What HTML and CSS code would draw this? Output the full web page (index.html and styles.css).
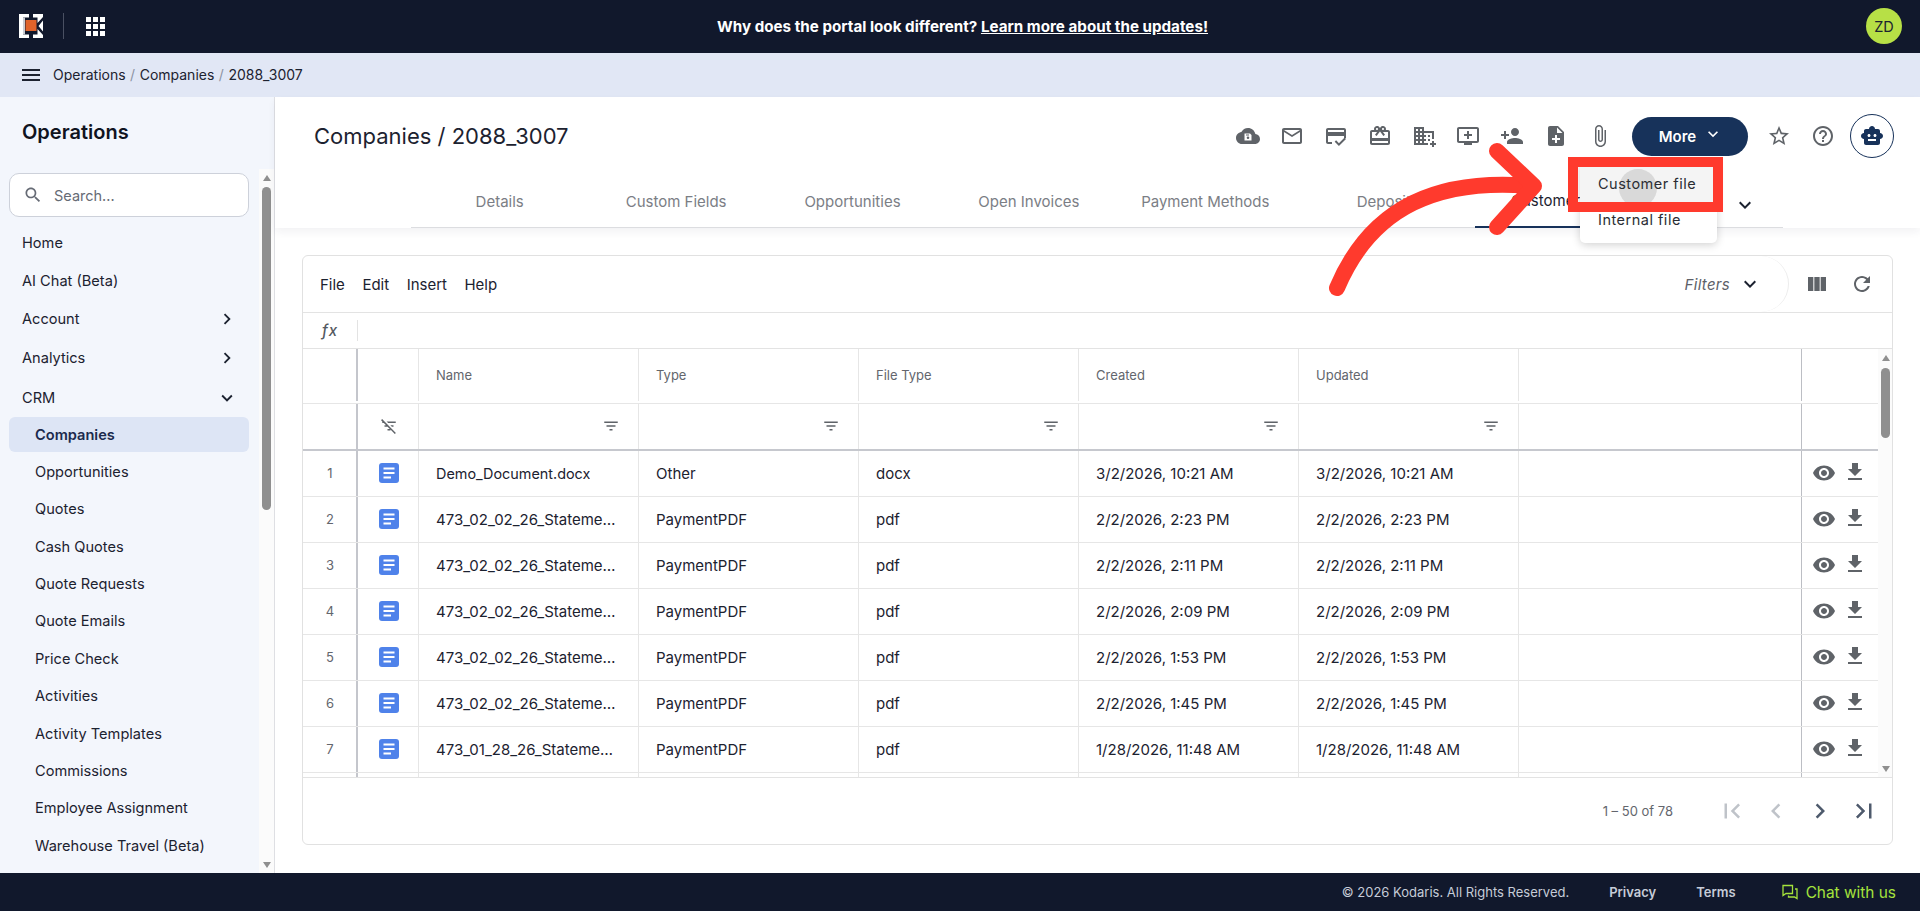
FILE: index.html
```html
<!DOCTYPE html>
<html lang="en">
<head>
<meta charset="utf-8">
<title>Companies / 2088_3007</title>
<link rel="stylesheet" href="styles.css">
</head>
<body>
<svg class="sprite" width="0" height="0" aria-hidden="true">
  <symbol id="i-cloud" viewBox="0 0 24 24"><path d="M19.35 10.04C18.67 6.59 15.64 4 12 4 9.11 4 6.6 5.64 5.35 8.04 2.34 8.36 0 10.91 0 14c0 3.31 2.69 6 6 6h13c2.76 0 5-2.24 5-5 0-2.64-2.05-4.78-4.65-4.96zM15.5 16.5h-7v-7h5.5l1.5 1.5z M12 15a1.3 1.3 0 1 0 0-2.6 1.3 1.3 0 0 0 0 2.6zM10 11.6h3v-1h-3z" fill-rule="evenodd"/></symbol>
  <symbol id="i-mail" viewBox="0 0 24 24"><path d="M20 4H4c-1.1 0-1.99.9-1.99 2L2 18c0 1.1.9 2 2 2h16c1.1 0 2-.9 2-2V6c0-1.1-.9-2-2-2zm0 14H4V8l8 5 8-5v10zm-8-7L4 6h16l-8 5z"/></symbol>
  <symbol id="i-card" viewBox="0 0 24 24"><path d="M20 4H4c-1.11 0-2 .89-2 2v12c0 1.11.89 2 2 2h4v-2H4v-6h16v2h2V6c0-1.11-.89-2-2-2zm0 4H4V6h16v2zm-5.07 11.17l-2.83-2.83-1.41 1.41L14.93 22 22 14.93l-1.41-1.41-5.66 5.65z"/></symbol>
  <symbol id="i-gift" viewBox="0 0 24 24"><path d="M20 6h-2.18c.11-.31.18-.65.18-1 0-1.66-1.34-3-3-3-1.05 0-1.96.54-2.5 1.35l-.5.67-.5-.68C10.96 2.54 10.05 2 9 2 7.34 2 6 3.34 6 5c0 .35.07.69.18 1H4c-1.11 0-1.99.89-1.99 2L2 19c0 1.11.89 2 2 2h16c1.11 0 2-.89 2-2V8c0-1.11-.89-2-2-2zm-5-2c.55 0 1 .45 1 1s-.45 1-1 1-1-.45-1-1 .45-1 1-1zM9 4c.55 0 1 .45 1 1s-.45 1-1 1-1-.45-1-1 .45-1 1-1zm11 15H4v-2h16v2zm0-5H4V8h5.08L7 10.83 8.62 12 11 8.76l1-1.36 1 1.36L15.38 12 17 10.83 14.92 8H20v6z"/></symbol>
  <symbol id="i-domain" viewBox="0 0 24 24"><path d="M12 7V3H2v18h14v-2h-4v-2h2v-2h-2v-2h2v-2h-2V9h8v6h2V7H12zM6 19H4v-2h2v2zm0-4H4v-2h2v2zm0-4H4V9h2v2zm0-4H4V5h2v2zm4 12H8v-2h2v2zm0-4H8v-2h2v2zm0-4H8V9h2v2zm0-4H8V5h2v2zm14 12v2h-2v2h-2v-2h-2v-2h2v-2h2v2h2zm-6-8h-2v2h2v-2zm0 4h-2v2h2v-2z"/></symbol>
  <symbol id="i-queue" viewBox="0 0 24 24"><path d="M21 3H3c-1.11 0-2 .89-2 2v12c0 1.1.89 2 2 2h5v2h8v-2h5c1.1 0 1.99-.9 1.99-2L23 5c0-1.11-.9-2-2-2zm0 14H3V5h18v12zm-5-7v2h-3v3h-2v-3H8v-2h3V7h2v3h3z"/></symbol>
  <symbol id="i-person" viewBox="0 0 24 24"><path d="M15 12c2.21 0 4-1.79 4-4s-1.79-4-4-4-4 1.79-4 4 1.79 4 4 4zm-9-2V7H4v3H1v2h3v3h2v-3h3v-2H6zm9 4c-2.67 0-8 1.34-8 4v2h16v-2c0-2.66-5.33-4-8-4z"/></symbol>
  <symbol id="i-note" viewBox="0 0 24 24"><path d="M14 2H6c-1.1 0-1.99.9-1.99 2L4 20c0 1.1.89 2 1.99 2H18c1.1 0 2-.9 2-2V8l-6-6zm2 14h-3v3h-2v-3H8v-2h3v-3h2v3h3v2zm-3-7V3.5L18.5 9H13z"/></symbol>
  <symbol id="i-attach" viewBox="0 0 24 24"><path d="M16.5 6v11.5c0 2.21-1.79 4-4 4s-4-1.79-4-4V5c0-1.38 1.12-2.5 2.5-2.5s2.5 1.12 2.5 2.5v10.5c0 .55-.45 1-1 1s-1-.45-1-1V6H10v9.5c0 1.38 1.12 2.5 2.5 2.5s2.5-1.12 2.5-2.5V5c0-2.21-1.79-4-4-4S7 2.79 7 5v12.5c0 3.04 2.46 5.5 5.5 5.5s5.5-2.46 5.5-5.5V6h-1.5z"/></symbol>
  <symbol id="i-star" viewBox="0 0 24 24"><path d="M22 9.24l-7.19-.62L12 2 9.19 8.63 2 9.24l5.46 4.73L5.82 21 12 17.27 18.18 21l-1.63-7.03L22 9.24zM12 15.4l-3.76 2.27 1-4.28-3.32-2.88 4.38-.38L12 6.1l1.71 4.04 4.38.38-3.32 2.88 1 4.28L12 15.4z"/></symbol>
  <symbol id="i-help" viewBox="0 0 24 24"><path d="M11 18h2v-2h-2v2zm1-16C6.48 2 2 6.48 2 12s4.48 10 10 10 10-4.48 10-10S17.52 2 12 2zm0 18c-4.41 0-8-3.59-8-8s3.59-8 8-8 8 3.59 8 8-3.59 8-8 8zm0-14c-2.21 0-4 1.79-4 4h2c0-1.1.9-2 2-2s2 .9 2 2c0 2-3 1.75-3 5h2c0-2.25 3-2.5 3-5 0-2.21-1.79-4-4-4z"/></symbol>
  <symbol id="i-bot" viewBox="0 0 24 24"><path d="M20 9V7c0-1.1-.9-2-2-2h-3c0-1.66-1.34-3-3-3S9 3.34 9 5H6c-1.1 0-2 .9-2 2v2c-1.66 0-3 1.34-3 3s1.34 3 3 3v4c0 1.1.9 2 2 2h12c1.1 0 2-.9 2-2v-4c1.66 0 3-1.34 3-3s-1.34-3-3-3zM7.5 11.5c0-.83.67-1.5 1.5-1.5s1.5.67 1.5 1.5S9.83 13 9 13s-1.5-.67-1.5-1.5zM16 17H8v-2h8v2zm-1-4c-.83 0-1.5-.67-1.5-1.5S14.17 10 15 10s1.5.67 1.5 1.5S15.83 13 15 13z"/></symbol>
  <symbol id="i-columns" viewBox="0 0 24 24"><path d="M14.67 5v14H9.33V5h5.34zm1 14H21V5h-5.33v14zm-7.34 0V5H3v14h5.33z"/></symbol>
  <symbol id="i-refresh" viewBox="0 0 24 24"><path d="M17.65 6.35C16.2 4.9 14.21 4 12 4c-4.42 0-7.99 3.58-7.99 8s3.57 8 7.99 8c3.73 0 6.84-2.55 7.73-6h-2.08c-.82 2.33-3.04 4-5.65 4-3.31 0-6-2.69-6-6s2.69-6 6-6c1.66 0 3.14.69 4.22 1.78L13 11h7V4l-2.35 2.35z"/></symbol>
  <symbol id="i-eye" viewBox="0 0 24 24"><path d="M12 4.5C7 4.5 2.73 7.61 1 12c1.73 4.39 6 7.5 11 7.5s9.27-3.11 11-7.5c-1.73-4.39-6-7.5-11-7.5zM12 17c-2.76 0-5-2.24-5-5s2.24-5 5-5 5 2.24 5 5-2.24 5-5 5zm0-8c-1.66 0-3 1.34-3 3s1.34 3 3 3 3-1.34 3-3-1.34-3-3-3z"/></symbol>
  <symbol id="i-download" viewBox="0 0 24 24"><path d="M19 9h-4V3H9v6H5l7 7 7-7zM5 18v2h14v-2H5z"/></symbol>
  <symbol id="i-filter" viewBox="0 0 24 24"><path d="M10 18h4v-2h-4v2zM3 6v2h18V6H3zm3 7h12v-2H6v2z"/></symbol>
  <symbol id="i-filter-off" viewBox="0 0 24 24"><path d="M10.83 8H21V6H8.83l2 2zm5 5H18v-2h-4.17l2 2zM14 16.83V18h-4v-2h3.17l-3-3H6v-2h2.17l-3-3H3V6h.17L1.39 4.22 2.8 2.81l18.38 18.38-1.41 1.41L14 16.83z"/></symbol>
  <symbol id="i-down" viewBox="0 0 24 24"><path d="M16.59 8.59L12 13.17 7.41 8.59 6 10l6 6 6-6z"/></symbol>
  <symbol id="i-right" viewBox="0 0 24 24"><path d="M10 6L8.59 7.41 13.17 12l-4.58 4.59L10 18l6-6z"/></symbol>
  <symbol id="i-left" viewBox="0 0 24 24"><path d="M15.41 7.41L14 6l-6 6 6 6 1.41-1.41L10.83 12z"/></symbol>
  <symbol id="i-first" viewBox="0 0 24 24"><path d="M18.41 16.59L13.82 12l4.59-4.59L17 6l-6 6 6 6zM6 6h2v12H6z"/></symbol>
  <symbol id="i-last" viewBox="0 0 24 24"><path d="M5.59 7.41L10.18 12l-4.59 4.59L7 18l6-6-6-6zM16 6h2v12h-2z"/></symbol>
  <symbol id="i-search" viewBox="0 0 24 24"><path d="M15.5 14h-.79l-.28-.27C15.41 12.59 16 11.11 16 9.5 16 5.91 13.09 3 9.5 3S3 5.91 3 9.5 5.91 16 9.5 16c1.61 0 3.09-.59 4.23-1.57l.27.28v.79l5 4.99L20.49 19l-4.99-5zm-6 0C7.01 14 5 11.99 5 9.5S7.01 5 9.5 5 14 7.01 14 9.5 11.99 14 9.5 14z"/></symbol>
  <symbol id="i-menu" viewBox="0 0 24 24"><path d="M3 18h18v-2H3v2zm0-5h18v-2H3v2zm0-7v2h18V6H3z"/></symbol>
  <symbol id="i-doc" viewBox="0 0 20 20"><rect width="20" height="20" rx="3" fill="#4f82ea"/><path d="M4.500 4.500h11v2h-11zM4.500 9h11v2h-11zM4.500 13.500h7.500v2H4.500z" fill="#fff"/></symbol>
</svg>

<header class="topbar">
  <div class="topbar-left">
    <svg class="logo" viewBox="0 0 24 24" aria-label="Kodaris">
      <path d="M0 0H10V3.500H4V20.500H10V24H0Z" fill="#fff"/>
      <path d="M4 3.500H6V20.500H4Z" fill="#c9ccd2"/>
      <path d="M14 0H24V3L18.500 9V3.500H14Z M14 24H24V21L18.500 15V20.500H14Z M19.500 12L24 6.500V17.500Z" fill="#fff"/>
      <rect x="6.500" y="6" width="11" height="11" fill="#e0632a"/>
    </svg>
    <span class="topbar-rule"></span>
    <div class="apps"><i></i><i></i><i></i><i></i><i></i><i></i><i></i><i></i><i></i></div>
  </div>
  <p class="banner">Why does the portal look different? <a href="#">Learn more about the updates!</a></p>
  <div class="avatar">ZD</div>
</header>

<nav class="crumbs">
  <svg class="ic ic-menu"><use href="#i-menu"/></svg>
  <span>Operations</span><em>/</em><span>Companies</span><em>/</em><span>2088_3007</span>
</nav>

<div class="body">
  <aside class="side">
    <h2 class="side-title">Operations</h2>
    <div class="side-scroll">
      <div class="side-list">
        <label class="search"><svg class="ic ic-search"><use href="#i-search"/></svg><span>Search...</span></label>
        <a class="item h38">Home</a>
        <a class="item h38">AI Chat (Beta)</a>
        <a class="item h38">Account<svg class="ic ic-nav"><use href="#i-right"/></svg></a>
        <a class="item h39">Analytics<svg class="ic ic-nav"><use href="#i-right"/></svg></a>
        <a class="item h40">CRM<svg class="ic ic-nav"><use href="#i-down"/></svg></a>
        <div class="sub">
          <a class="subitem active">Companies</a>
          <a class="subitem">Opportunities</a>
          <a class="subitem">Quotes</a>
          <a class="subitem">Cash Quotes</a>
          <a class="subitem">Quote Requests</a>
          <a class="subitem">Quote Emails</a>
          <a class="subitem">Price Check</a>
          <a class="subitem">Activities</a>
          <a class="subitem">Activity Templates</a>
          <a class="subitem">Commissions</a>
          <a class="subitem">Employee Assignment</a>
          <a class="subitem">Warehouse Travel (Beta)</a>
        </div>
      </div>
      <div class="vbar vbar-side"><b class="up"></b><i class="thumb"></i><b class="down"></b></div>
    </div>
  </aside>

  <main class="main">
    <section class="head">
      <div class="head-top">
        <h1>Companies / 2088_3007</h1>
        <div class="actions">
          <svg class="ic act"><use href="#i-cloud"/></svg>
          <svg class="ic act"><use href="#i-mail"/></svg>
          <svg class="ic act"><use href="#i-card"/></svg>
          <svg class="ic act"><use href="#i-gift"/></svg>
          <svg class="ic act"><use href="#i-domain"/></svg>
          <svg class="ic act"><use href="#i-queue"/></svg>
          <svg class="ic act"><use href="#i-person"/></svg>
          <svg class="ic act"><use href="#i-note"/></svg>
          <svg class="ic act"><use href="#i-attach"/></svg>
          <button class="more">More<svg class="ic ic-more"><use href="#i-down"/></svg></button>
          <svg class="ic act act-star"><use href="#i-star"/></svg>
          <svg class="ic act act-help"><use href="#i-help"/></svg>
          <span class="bot"><svg class="ic ic-bot"><use href="#i-bot"/></svg></span>
        </div>
      </div>
      <div class="tabs">
        <a class="tab">Details</a>
        <a class="tab">Custom Fields</a>
        <a class="tab">Opportunities</a>
        <a class="tab">Open Invoices</a>
        <a class="tab">Payment Methods</a>
        <a class="tab tab-dep">Deposits</a>
        <a class="tab current">Customer Files</a>
        <svg class="ic ic-tabs"><use href="#i-down"/></svg>
      </div>
    </section>

    <section class="card">
      <div class="toolbar">
        <div class="tmenu"><span>File</span><span>Edit</span><span>Insert</span><span>Help</span></div>
        <div class="filters"><span>Filters</span><svg class="ic ic-filters"><use href="#i-down"/></svg></div>
        <div class="ticons">
          <svg class="ic act"><use href="#i-columns"/></svg>
          <svg class="ic act"><use href="#i-refresh"/></svg>
        </div>
      </div>
      <div class="fx"><span class="fx-label">fx</span><span class="fx-input"></span></div>

      <div class="grid-wrap">
        <div class="grid">
          <div class="row row-head">
            <div class="c c-n"></div><div class="c c-i"></div>
            <div class="c">Name</div><div class="c">Type</div><div class="c">File Type</div><div class="c">Created</div><div class="c">Updated</div>
            <div class="c c-blank"></div><div class="c c-a"></div>
          </div>
          <div class="row row-filter">
            <div class="c c-n"></div><div class="c c-i"><svg class="ic ic-fl off"><use href="#i-filter-off"/></svg></div>
            <div class="c c-f"><svg class="ic ic-fl"><use href="#i-filter"/></svg></div>
            <div class="c c-f"><svg class="ic ic-fl"><use href="#i-filter"/></svg></div>
            <div class="c c-f"><svg class="ic ic-fl"><use href="#i-filter"/></svg></div>
            <div class="c c-f"><svg class="ic ic-fl"><use href="#i-filter"/></svg></div>
            <div class="c c-f"><svg class="ic ic-fl"><use href="#i-filter"/></svg></div>
            <div class="c c-blank"></div><div class="c c-a"></div>
          </div>
          <div class="row">
            <div class="c c-n">1</div><div class="c c-i"><svg class="ic-doc"><use href="#i-doc"/></svg></div>
            <div class="c"><span class="clip clip-short">Demo_Document.docx</span></div><div class="c">Other</div><div class="c">docx</div><div class="c">3/2/2026, 10:21 AM</div><div class="c">3/2/2026, 10:21 AM</div>
            <div class="c c-blank"></div><div class="c c-a"><svg class="ic ic-eye"><use href="#i-eye"/></svg><svg class="ic ic-dl"><use href="#i-download"/></svg></div>
          </div>
          <div class="row">
            <div class="c c-n">2</div><div class="c c-i"><svg class="ic-doc"><use href="#i-doc"/></svg></div>
            <div class="c"><span class="clip">473_02_02_26_Statement.pdf</span></div><div class="c">PaymentPDF</div><div class="c">pdf</div><div class="c">2/2/2026, 2:23 PM</div><div class="c">2/2/2026, 2:23 PM</div>
            <div class="c c-blank"></div><div class="c c-a"><svg class="ic ic-eye"><use href="#i-eye"/></svg><svg class="ic ic-dl"><use href="#i-download"/></svg></div>
          </div>
          <div class="row">
            <div class="c c-n">3</div><div class="c c-i"><svg class="ic-doc"><use href="#i-doc"/></svg></div>
            <div class="c"><span class="clip">473_02_02_26_Statement.pdf</span></div><div class="c">PaymentPDF</div><div class="c">pdf</div><div class="c">2/2/2026, 2:11 PM</div><div class="c">2/2/2026, 2:11 PM</div>
            <div class="c c-blank"></div><div class="c c-a"><svg class="ic ic-eye"><use href="#i-eye"/></svg><svg class="ic ic-dl"><use href="#i-download"/></svg></div>
          </div>
          <div class="row">
            <div class="c c-n">4</div><div class="c c-i"><svg class="ic-doc"><use href="#i-doc"/></svg></div>
            <div class="c"><span class="clip">473_02_02_26_Statement.pdf</span></div><div class="c">PaymentPDF</div><div class="c">pdf</div><div class="c">2/2/2026, 2:09 PM</div><div class="c">2/2/2026, 2:09 PM</div>
            <div class="c c-blank"></div><div class="c c-a"><svg class="ic ic-eye"><use href="#i-eye"/></svg><svg class="ic ic-dl"><use href="#i-download"/></svg></div>
          </div>
          <div class="row">
            <div class="c c-n">5</div><div class="c c-i"><svg class="ic-doc"><use href="#i-doc"/></svg></div>
            <div class="c"><span class="clip">473_02_02_26_Statement.pdf</span></div><div class="c">PaymentPDF</div><div class="c">pdf</div><div class="c">2/2/2026, 1:53 PM</div><div class="c">2/2/2026, 1:53 PM</div>
            <div class="c c-blank"></div><div class="c c-a"><svg class="ic ic-eye"><use href="#i-eye"/></svg><svg class="ic ic-dl"><use href="#i-download"/></svg></div>
          </div>
          <div class="row">
            <div class="c c-n">6</div><div class="c c-i"><svg class="ic-doc"><use href="#i-doc"/></svg></div>
            <div class="c"><span class="clip">473_02_02_26_Statement.pdf</span></div><div class="c">PaymentPDF</div><div class="c">pdf</div><div class="c">2/2/2026, 1:45 PM</div><div class="c">2/2/2026, 1:45 PM</div>
            <div class="c c-blank"></div><div class="c c-a"><svg class="ic ic-eye"><use href="#i-eye"/></svg><svg class="ic ic-dl"><use href="#i-download"/></svg></div>
          </div>
          <div class="row">
            <div class="c c-n">7</div><div class="c c-i"><svg class="ic-doc"><use href="#i-doc"/></svg></div>
            <div class="c"><span class="clip">473_01_28_26_Statement.pdf</span></div><div class="c">PaymentPDF</div><div class="c">pdf</div><div class="c">1/28/2026, 11:48 AM</div><div class="c">1/28/2026, 11:48 AM</div>
            <div class="c c-blank"></div><div class="c c-a"><svg class="ic ic-eye"><use href="#i-eye"/></svg><svg class="ic ic-dl"><use href="#i-download"/></svg></div>
          </div>
          <div class="row">
            <div class="c c-n"></div><div class="c c-i"></div><div class="c"></div><div class="c"></div><div class="c"></div><div class="c"></div><div class="c"></div><div class="c c-blank"></div><div class="c c-a"></div>
          </div>
        </div>
        <div class="vbar vbar-grid"><b class="up"></b><i class="thumb"></i><b class="down"></b></div>
      </div>

      <div class="pager">
        <span class="pager-text">1 – 50 of 78</span>
        <svg class="ic pg dim"><use href="#i-first"/></svg>
        <svg class="ic pg dim"><use href="#i-left"/></svg>
        <svg class="ic pg"><use href="#i-right"/></svg>
        <svg class="ic pg"><use href="#i-last"/></svg>
      </div>
    </section>
  </main>
</div>

<footer class="foot">
  <span class="copy">© 2026 Kodaris. All Rights Reserved.</span>
  <a class="foot-link">Privacy</a>
  <a class="foot-link">Terms</a>
  <a class="chat">
    <svg class="ic-chat" viewBox="0 0 16 16"><path d="M1 1.500H10.500V9.500H4L1 11.500Z M13 5H15V14.500L12.500 13H6.500V11.500" fill="none" stroke="currentColor" stroke-width="1.300"/></svg>
    Chat with us
  </a>
</footer>

<div class="menu">
  <div class="menu-item hover"><span class="ripple"></span><span class="menu-label">Customer file</span></div>
  <div class="menu-item"><span class="menu-label">Internal file</span></div>
</div>

<div class="redbox"></div>
<svg class="arrow" viewBox="0 0 1920 911" aria-hidden="true">
  <path d="M1337 288C1372 205 1440 178 1532 186" fill="none" stroke="#ff3a2d" stroke-width="16" stroke-linecap="round"/>
  <path d="M1497 151L1534 186 1497 227" fill="none" stroke="#ff3a2d" stroke-width="16" stroke-linecap="round" stroke-linejoin="round"/>
</svg>
</body>
</html>
```

FILE: styles.css
```css
* { box-sizing: border-box; }
html, body { margin: 0; height: 911px; overflow: hidden; }
body {
  position: relative;
  display: flex;
  flex-direction: column;
  font-family: Inter, "Noto Sans", "Liberation Sans", sans-serif;
  font-size: 14px;
  color: #1c2230;
  background: #fff;
}
.sprite { position: absolute; }
.ic { width: 24px; height: 24px; fill: #5f6368; flex: none; display: block; }

.topbar {
  height: 53px; flex: none;
  background: #11182c;
  display: flex; align-items: center;
  padding: 0 18px 1px 19px;
  position: relative;
}
.topbar-left { display: flex; align-items: center; width: 200px; }
.logo { width: 24px; height: 24px; display: block; }
.topbar-rule { width: 1px; height: 26px; background: #4a5062; margin: 0 22px 0 20px; }
.apps { display: grid; grid-template-columns: repeat(3, 5px); gap: 2px; }
.apps i { width: 5px; height: 5px; background: #fff; display: block; }
.banner { flex: 1; margin: 0; text-align: center; color: #fff; font-weight: 700; font-size: 15.200px; padding-right: 160px; }
.banner a { color: #fff; text-decoration: underline; }
.avatar {
  width: 36px; height: 36px; border-radius: 50%;
  background: #b7e046; color: #1b2330;
  display: flex; align-items: center; justify-content: center;
  font-size: 14.500px; font-weight: 400;
}

.crumbs {
  height: 44px; flex: none;
  background: #e1e7f5;
  display: flex; align-items: center;
  padding: 0 0 2px 19px;
  font-size: 14px;
  color: #1c2230;
}
.crumbs em { font-style: normal; color: #8c93a3; margin: 0 4.500px; }
.ic-menu { fill: #1c2230; margin-right: 10px; margin-top: 1px; }

.body { flex: 1; min-height: 0; display: flex; }
.side {
  width: 275px; flex: none;
  background: #f3f6fc;
  border-right: 1px solid #dedfe3;
  display: flex; flex-direction: column;
}
.side-title { margin: 0; height: 72px; padding: 23px 0 0 22px; font-size: 20px; line-height: 24px; font-weight: 600; color: #10141f; }
.side-scroll { flex: 1; min-height: 0; display: flex; }
.side-list { flex: 1; min-width: 0; overflow: hidden; padding: 4px 10px 0 9px; }
.search {
  height: 44px; margin-bottom: 7px;
  background: #fff; border: 1px solid #cdd1da; border-radius: 10px;
  display: flex; align-items: center; padding-left: 13px;
  color: #666b75; font-size: 14.500px;
}
.ic-search { width: 20px; height: 20px; margin-right: 11px; fill: #666b75; }
.item { display: flex; align-items: center; justify-content: space-between; padding: 0 11px 0 13px; font-size: 14.600px; color: #1c2230; }
.h38 { height: 38px; }
.h39 { height: 39px; }
.h40 { height: 40px; padding-top: 1px; }
.ic-nav { width: 22px; height: 22px; fill: #1c2230; }
.sub { display: flex; flex-direction: column; gap: 2.400px; }
.subitem { height: 35px; flex: none; display: flex; align-items: center; padding-left: 26px; font-size: 14.600px; color: #1c2230; border-radius: 6px; }
.subitem.active { background: #dde5f5; font-weight: 600; color: #1b2a4c; }

.vbar { flex: none; width: 15px; background: #fbfbfb; display: flex; flex-direction: column; align-items: center; position: relative; }
.vbar .thumb { display: block; width: 9px; background: #8f8f8f; border-radius: 5px; }
.vbar .up, .vbar .down { display: block; width: 0; height: 0; border-left: 4.500px solid transparent; border-right: 4.500px solid transparent; }
.vbar .up { border-bottom: 6px solid #8f8f8f; }
.vbar .down { border-top: 6px solid #8f8f8f; margin-top: auto; }
.vbar-side { padding: 6px 0 5px; }
.vbar-side .up { margin-bottom: 6px; }
.vbar-side .thumb { height: 323px; }
.vbar-grid { padding: 6px 0 5px; }
.vbar-grid .up { margin-bottom: 7px; }
.vbar-grid .thumb { height: 70px; }

.main { flex: 1; min-width: 0; display: flex; flex-direction: column; background: #fff; }
.head { height: 131px; flex: none; box-shadow: 0 4px 8px rgba(30, 40, 60, .06); position: relative; }
.head-top { height: 78px; display: flex; align-items: center; justify-content: space-between; padding: 0 26px 0 39px; }
h1 { margin: 0; font-size: 22px; font-weight: 400; color: #1c2230; }
.actions { display: flex; align-items: center; }
.act { width: 24px; height: 24px; margin-right: 20px; }
.more {
  width: 116px; height: 39px; border: 0; border-radius: 20px;
  background: #17325a; color: #fff;
  font: 600 15px Inter, sans-serif;
  display: flex; align-items: center; justify-content: center;
  margin: 0 19px 0 0; padding: 0 0 0 2px;
}
.ic-more { width: 20px; height: 20px; fill: #fff; margin: -4px 0 0 7px; }
.act-star { margin-right: 20px; }
.act-help { margin-right: 15px; }
.bot { width: 44px; height: 44px; border: 1px solid #17325a; border-radius: 50%; display: flex; align-items: center; justify-content: center; }
.ic-bot { fill: #17325a; }
.tabs { margin-left: 136px; width: 1372px; height: 53px; display: flex; border-bottom: 1px solid #dcdde0; position: relative; }
.tab { width: 176.400px; flex: none; display: flex; align-items: center; justify-content: center; height: 53px; padding: 0 0 1px 1px; font-size: 15px; color: #7b7e85; }
.tab-dep { margin-left: 6px; }
.tab.current { color: #1c2230; border-bottom: 2px solid #17325a; padding-bottom: 0; }
.ic-tabs { fill: #1c2230; margin: 18px 0 0 81px; }

.card {
  width: 1591px; height: 590px; margin: 27px 0 0 27px;
  border: 1px solid #e1e1e1; border-radius: 6px;
  display: flex; flex-direction: column; overflow: hidden;
}
.toolbar { height: 57px; flex: none; display: flex; align-items: center; border-bottom: 1px solid #e3e3e3; }
.tmenu { display: flex; gap: 17.500px; padding-left: 17px; font-size: 15px; color: #1c2230; flex: 1; }
.filters {
  height: 56px; display: flex; align-items: center;
  padding-right: 26px;
  border-right: 1px solid #ececec;
  border-radius: 0 50px 50px 0;
  font-style: italic; color: #5d6168; font-size: 15px;
}
.filters span { margin-right: 8px; letter-spacing: .3px; }
.ic-filters { fill: #1c2230; }
.ticons { width: 103px; flex: none; display: flex; padding-left: 16px; }
.ticons .act { margin-right: 21px; }
.fx { height: 36px; flex: none; display: flex; align-items: center; border-bottom: 1px solid #e3e3e3; }
.fx-label { width: 54px; padding-left: 19px; font-style: italic; font-weight: 500; color: #555a62; font-size: 15px; letter-spacing: 1px; }
.fx-input { border-left: 1px solid #e3e3e3; height: 21px; }

.grid-wrap { height: 429px; flex: none; display: flex; overflow: hidden; border-bottom: 1px solid #e3e3e3; }
.grid { width: 1575px; flex: none; overflow: hidden; font-size: 15px; }
.row {
  height: 46px;
  display: grid;
  grid-template-columns: 55px 61px 220px 220px 220px 220px 220px 283px 76px;
  border-bottom: 1px solid #e6e6e6;
}
.row-head { height: 55px; color: #63666d; font-size: 13px; padding-bottom: 2px; }
.row-filter { height: 46.500px; border-bottom: 2px solid #c6c8ce; }
.c { border-right: 1px solid #e6e6e6; padding: 0 17px; display: flex; align-items: center; min-width: 0; }
.c-n { border-right: 2px solid #c4c6cc; padding: 0 0 0 1px; justify-content: center; font-size: 13px; color: #63666d; }
.c-i { padding: 0 0 0 2px; justify-content: center; }
.c-f { justify-content: flex-end; padding-right: 18px; }
.c-blank { border-right: 1px solid #bcbec4; }
.c-a { border-right: 0; padding: 0 0 0 10px; gap: 7px; }
.clip { overflow: hidden; white-space: nowrap; text-overflow: ellipsis; }
.clip-short { font-size: 14.400px; }
.ic-doc { width: 20px; height: 20px; display: block; }
.ic-fl { width: 18px; height: 18px; fill: #5f6368; }
.ic-eye { width: 24px; height: 24px; }
.ic-dl { width: 24px; height: 24px; margin-top: -3px; }

.pager { flex: 1; display: flex; align-items: center; padding: 0 13px 0 0; justify-content: flex-end; }
.pager-text { font-size: 13px; color: #63666d; margin-right: 44px; }
.pg { width: 30px; height: 30px; fill: #4e5a6c; margin-left: 14px; }
.pg.dim { fill: #bfc3c9; }
.pager-text + .pg { margin-left: 0; }

.foot {
  height: 38px; flex: none;
  background: #11182c;
  display: flex; align-items: center; justify-content: flex-end;
  padding-right: 24px;
  font-size: 13px; color: #c6ccd8;
}
.copy { margin-right: 40px; }
.foot-link { font-weight: 600; margin-right: 40px; color: #c6ccd8; }
.foot-link:nth-of-type(2) { margin-right: 46px; }
.chat { display: flex; align-items: center; color: #a5e23c; font-size: 15.400px; }
.ic-chat { width: 16px; height: 16px; margin-right: 8px; }

.menu {
  position: absolute; left: 1580px; top: 161px; width: 137px; height: 82px;
  background: #fff; border-radius: 5px;
  box-shadow: 0 2px 8px rgba(0, 0, 0, .18);
  font-size: 14.500px; color: #2a2d33;
  overflow: hidden; padding-top: 4px;
}
.menu-item { height: 35px; display: flex; align-items: center; padding-left: 18px; position: relative; }
.menu-item.hover { height: 37px; background: #f4f4f4; }
.ripple { position: absolute; left: 39px; top: 4px; width: 38px; height: 38px; border-radius: 50%; background: #d9d9d9; }
.menu-label { position: relative; letter-spacing: .5px; }
.redbox { position: absolute; left: 1568px; top: 157px; width: 155px; height: 55px; border: 10px solid #ff3a2d; }
.arrow { position: absolute; left: 0; top: 0; width: 1920px; height: 911px; pointer-events: none; }
```
